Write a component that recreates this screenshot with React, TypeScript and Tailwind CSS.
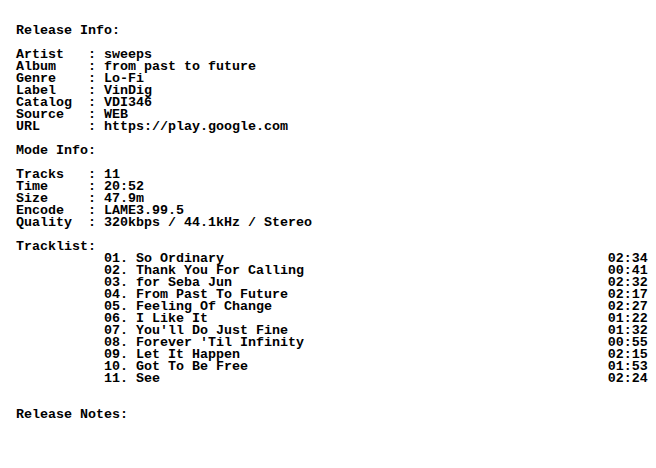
import React from 'react';

const info: [string, string][] = [
  ['Artist', 'sweeps'],
  ['Album', 'from past to future'],
  ['Genre', 'Lo-Fi'],
  ['Label', 'VinDig'],
  ['Catalog', 'VDI346'],
  ['Source', 'WEB'],
  ['URL', 'https://play.google.com'],
];

const mode: [string, string][] = [
  ['Tracks', '11'],
  ['Time', '20:52'],
  ['Size', '47.9m'],
  ['Encode', 'LAME3.99.5'],
  ['Quality', '320kbps / 44.1kHz / Stereo'],
];

const tracks: [string, string][] = [
  ['So Ordinary', '02:34'],
  ['Thank You For Calling', '00:41'],
  ['for Seba Jun', '02:32'],
  ['From Past To Future', '02:17'],
  ['Feeling Of Change', '02:27'],
  ['I Like It', '01:22'],
  ["You'll Do Just Fine", '01:32'],
  ["Forever 'Til Infinity", '00:55'],
  ['Let It Happen', '02:15'],
  ['Got To Be Free', '01:53'],
  ['See', '02:24'],
];

const field = ([k, v]: [string, string]) => k.padEnd(9) + ': ' + v;

const lines: string[] = [
  'Release Info:',
  '',
  ...info.map(field),
  '',
  'Mode Info:',
  '',
  ...mode.map(field),
  '',
  'Tracklist:',
  ...tracks.map(([t, d], i) =>
    (' '.repeat(11) + String(i + 1).padStart(2, '0') + '. ' + t).padEnd(74) + d
  ),
  '',
  '',
  'Release Notes:',
];

export default function App() {
  return (
    <div className="w-[656px] h-[468px] bg-white overflow-hidden pt-[25px] pl-[16px]">
      <pre className="m-0 whitespace-pre font-bold text-black text-[13.333px] leading-[12px] font-['Liberation_Mono',monospace]">
        {lines.join('\n')}
      </pre>
    </div>
  );
}
